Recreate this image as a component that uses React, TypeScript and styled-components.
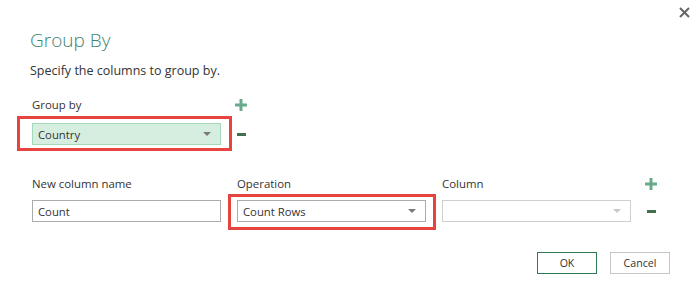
import styled, { createGlobalStyle } from "styled-components";

const GlobalStyle = createGlobalStyle`
  html, body {
    margin: 0;
    padding: 0;
    background: #ffffff;
  }
  body {
    font-family: "Open Sans", "Noto Sans", "Liberation Sans", sans-serif;
    color: #333333;
  }
`;

const groupColumns = ["Country"];

const aggregations = [
  { name: "Count", operation: "Count Rows", column: "" },
];

export default function App() {
  return (
    <>
      <GlobalStyle />
      <Dialog>
        <TopBar>
          <CloseButton aria-label="Close">
            <svg width="11" height="11" viewBox="0 0 11 11">
              <path d="M1 1 L10 10 M10 1 L1 10" stroke="#666" strokeWidth="2" />
            </svg>
          </CloseButton>
        </TopBar>

        <Title>Group By</Title>
        <Subtitle>Specify the columns to group by.</Subtitle>

        <GroupGrid>
          <Label>Group by</Label>
          <IconCell>
            <PlusIcon />
          </IconCell>
          {groupColumns.map((col) => (
            <Row key={col}>
              <Highlight $top={7} $right={11} $bottom={6} $left={15}>
                <Select $tone="green">
                  <span>{col}</span>
                  <Arrow />
                </Select>
              </Highlight>
              <IconCell>
                <MinusIcon />
              </IconCell>
            </Row>
          ))}
        </GroupGrid>

        <AggGrid>
          <Label>New column name</Label>
          <Label>Operation</Label>
          <Label>Column</Label>
          <IconCell $shift={-2}>
            <PlusIcon />
          </IconCell>
          {aggregations.map((agg) => (
            <Row key={agg.name}>
              <TextInput value={agg.name} readOnly />
              <Highlight $top={6} $right={10} $bottom={8} $left={9}>
                <Select $tone="plain">
                  <span>{agg.operation}</span>
                  <Arrow />
                </Select>
              </Highlight>
              <Select $tone="disabled">
                <span>{agg.column}</span>
                <Arrow $faded />
              </Select>
              <IconCell $shift={-2}>
                <MinusIcon />
              </IconCell>
            </Row>
          ))}
        </AggGrid>

        <Footer>
          <Button $primary>OK</Button>
          <Button>Cancel</Button>
        </Footer>
      </Dialog>
    </>
  );
}

function PlusIcon() {
  return (
    <svg width="12" height="12" viewBox="0 0 12 12">
      <path d="M4.5 0 H7.5 V4.5 H12 V7.5 H7.5 V12 H4.5 V7.5 H0 V4.5 H4.5 Z" fill="#6aaa8c" />
    </svg>
  );
}

function MinusIcon() {
  return (
    <svg width="9" height="3" viewBox="0 0 9 3">
      <rect width="9" height="3" fill="#436f4c" />
    </svg>
  );
}

const Dialog = styled.div`
  width: 699px;
  height: 307px;
  box-sizing: border-box;
  padding: 0 29px 0 30px;
  display: flex;
  flex-direction: column;
`;

const TopBar = styled.div`
  display: flex;
  justify-content: flex-end;
  height: 26px;
  margin-right: -20px;
  padding-top: 7px;
  box-sizing: border-box;
`;

const CloseButton = styled.div`
  width: 11px;
  height: 11px;
  display: flex;
`;

const Title = styled.h1`
  margin: 0;
  font-size: 19px;
  font-weight: 300;
  line-height: 28px;
  color: #3b8471;
`;

const Subtitle = styled.p`
  margin: 8px 0 0;
  font-size: 12.5px;
  line-height: 18px;
  color: #333333;
`;

const GroupGrid = styled.div`
  display: grid;
  grid-template-columns: 189px 12px;
  column-gap: 14px;
  row-gap: 9px;
  margin-top: 16px;
  padding-left: 2px;
  align-items: center;
`;

const AggGrid = styled.div`
  display: grid;
  grid-template-columns: 189px 189px 189px 12px;
  column-gap: 16px;
  row-gap: 7px;
  margin-top: 30px;
  padding-left: 2px;
  align-items: center;
`;

const Row = styled.div`
  display: contents;
`;

const Label = styled.div`
  font-size: 11.4px;
  line-height: 18px;
  color: #333333;
`;

const IconCell = styled.div<{ $shift?: number }>`
  display: flex;
  align-items: center;
  justify-content: center;
  width: 12px;
  height: 12px;
  margin-left: ${(p) => p.$shift ?? 0}px;
`;

const Highlight = styled.div<{ $top: number; $right: number; $bottom: number; $left: number }>`
  position: relative;
  &::after {
    content: "";
    position: absolute;
    top: -${(p) => p.$top}px;
    right: -${(p) => p.$right}px;
    bottom: -${(p) => p.$bottom}px;
    left: -${(p) => p.$left}px;
    border: 3px solid #e8443f;
    pointer-events: none;
  }
`;

const tones = {
  green: { bg: "#d5eee0", border: "#a3d9b9" },
  plain: { bg: "#ffffff", border: "#ababab" },
  disabled: { bg: "#ffffff", border: "#cfcfcf" },
};

const Select = styled.div<{ $tone: keyof typeof tones }>`
  height: 22px;
  box-sizing: border-box;
  border: 1px solid ${(p) => tones[p.$tone].border};
  background: ${(p) => tones[p.$tone].bg};
  display: flex;
  align-items: center;
  justify-content: space-between;
  padding: 0 9px 0 5px;
  font-size: 11.3px;
  color: #333333;
`;

const Arrow = styled.span<{ $faded?: boolean }>`
  width: 0;
  height: 0;
  border-left: 4px solid transparent;
  border-right: 4px solid transparent;
  border-top: 4px solid ${(p) => (p.$faded ? "#c8c8c8" : "#7a7a7a")};
`;

const TextInput = styled.input`
  height: 22px;
  box-sizing: border-box;
  border: 1px solid #ababab;
  padding: 0 5px;
  font-family: inherit;
  font-size: 11.3px;
  color: #333333;
  outline: none;
  width: 189px;
`;

const Footer = styled.div`
  display: flex;
  justify-content: flex-end;
  gap: 13px;
  margin-top: 30px;
`;

const Button = styled.div<{ $primary?: boolean }>`
  width: 60px;
  height: 22px;
  box-sizing: border-box;
  border: 1px solid ${(p) => (p.$primary ? "#2d7a52" : "#c6c6c6")};
  display: flex;
  align-items: center;
  justify-content: center;
  font-size: 10.6px;
  color: #333333;
`;
